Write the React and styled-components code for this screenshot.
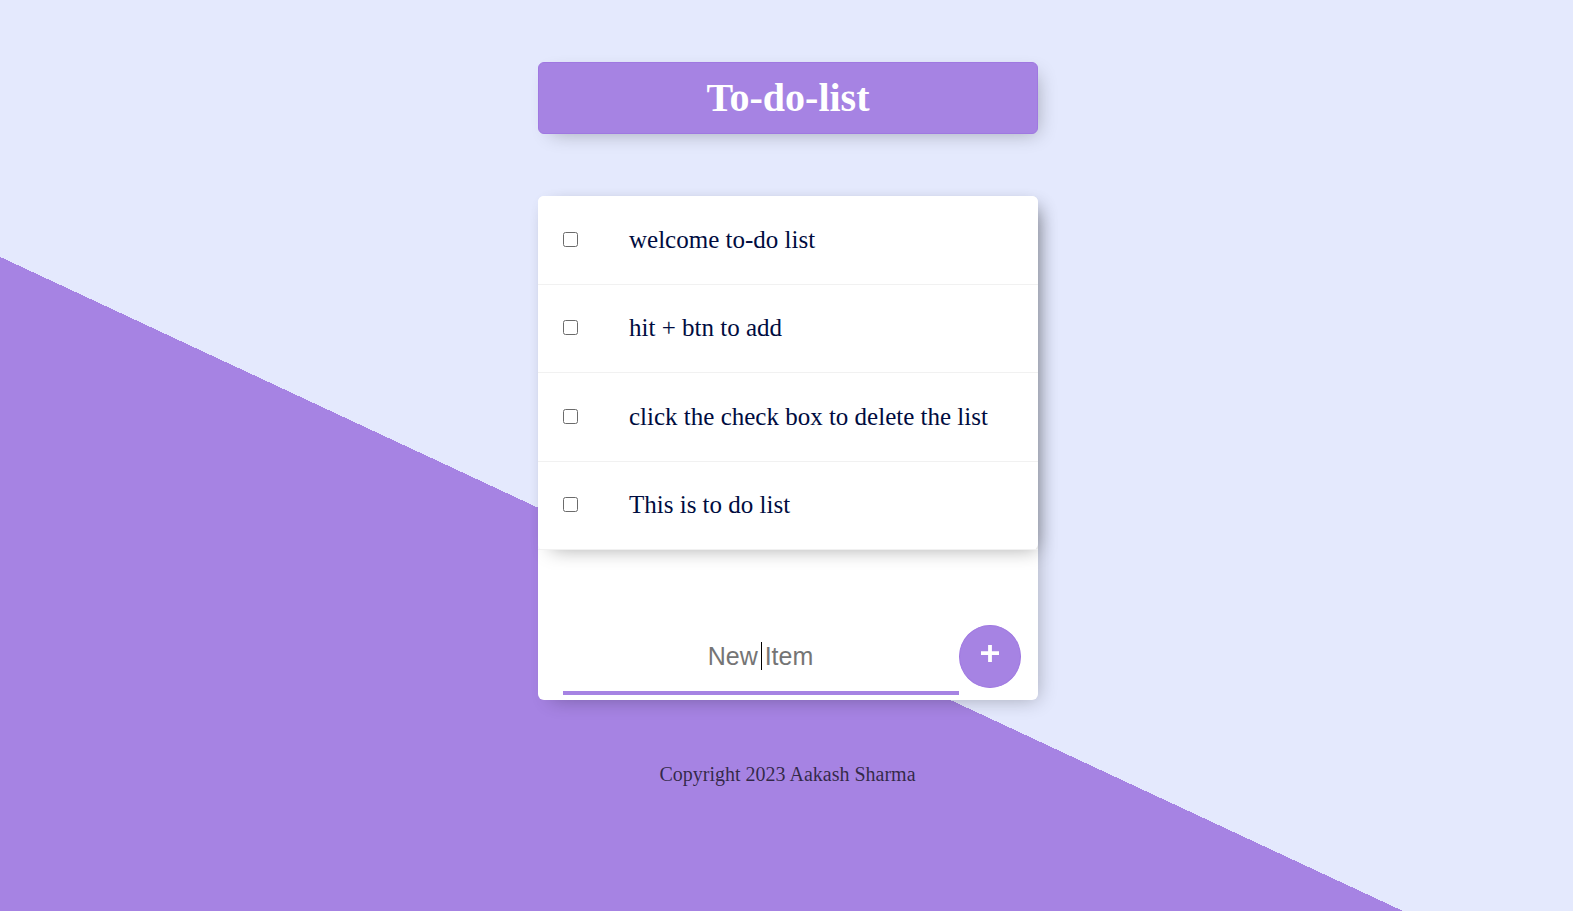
import React from "react";
import styled, { createGlobalStyle } from "styled-components";

const GlobalStyle = createGlobalStyle`
  * { box-sizing: border-box; }
  html { min-height: 100%; background: #e4e9fd; }
  body {
    margin: 0;
    font-family: "Liberation Serif", "Times New Roman", serif;
  }
`;

const shadow = "6.25px 6.25px 18.75px -6.25px rgba(0, 0, 0, 0.3)";

const Page = styled.main`
  min-height: 100vh;
  padding-top: 62px;
  display: flex;
  flex-direction: column;
  align-items: center;
  background: linear-gradient(25deg, #a683e3 39.78%, #e4e9fd 39.78%);
`;

const Heading = styled.header`
  width: 500px;
  height: 72px;
  margin-left: 3px;
  display: flex;
  align-items: center;
  justify-content: center;
  background: #a683e3;
  border: 1px solid #9f78e1;
  border-radius: 6px;
  box-shadow: ${shadow};
`;

const Title = styled.h1`
  margin: 0;
  color: #fff;
  font-size: 40px;
  line-height: 46px;
  font-weight: 700;
`;

const Card = styled.section`
  width: 500px;
  height: 503.6px;
  margin: 62.4px 0 0 3px;
  background: #fff;
  border-radius: 6px;
  box-shadow: ${shadow};
`;

const List = styled.ul`
  margin: 0;
  padding: 0;
  list-style: none;
  background: #fff;
  border-radius: 6px;
  box-shadow: 6.25px 6.25px 18.75px -6.25px rgba(0, 0, 0, 0.35);
`;

const Item = styled.li`
  height: 88.4px;
  display: flex;
  align-items: center;
  padding: 0 0 1.2px 25px;
  border-bottom: 1px solid #f1f1f1;
`;

const Check = styled.input`
  appearance: none;
  width: 15px;
  height: 15px;
  margin: 0 51px 0 0;
  border: 1px solid #6b6b6b;
  border-radius: 2.5px;
  background: #fff;
`;

const Label = styled.label`
  color: #000c40;
  font-size: 25px;
  line-height: 29px;
  white-space: nowrap;
`;

const Form = styled.form`
  display: flex;
  align-items: flex-start;
  margin: 69.1px 0 0 25px;
`;

const Field = styled.div`
  position: relative;
  width: 396px;
  height: 76px;
`;

const TextInput = styled.input`
  display: block;
  width: 100%;
  height: 100%;
  padding: 3px 1px 0 0;
  border: 0;
  border-bottom: 4px solid #a683e3;
  outline: 0;
  background: transparent;
  text-align: center;
  font: 25px "Liberation Sans", Arial, sans-serif;
  &::placeholder { color: #757575; opacity: 1; }
`;

const Caret = styled.span`
  position: absolute;
  left: 198px;
  top: 23px;
  width: 1px;
  height: 28px;
  background: #000;
`;

const AddButton = styled.button`
  width: 62px;
  height: 63px;
  margin-top: 6px;
  padding: 0;
  display: grid;
  place-items: center;
  border: 1px solid #9f78e1;
  border-radius: 50%;
  background: #a683e3;
  color: #fff;
`;

const PlusIcon = styled.svg`
  display: block;
  width: 20px;
  height: 19px;
  margin-bottom: 6px;
`;

const Footer = styled.footer`
  margin: 62px 0 0 2px;
  color: rgba(0, 0, 0, 0.7);
  font-size: 20px;
  line-height: 24px;
`;

const items = [
  "welcome to-do list",
  "hit + btn to add",
  "click the check box to delete the list",
  "This is to do list",
];

export default function App() {
  return (
    <Page>
      <GlobalStyle />
      <Heading><Title>To-do-list</Title></Heading>
      <Card>
        <List>
          {items.map((text, i) => (
            <Item key={text}>
              <Check type="checkbox" id={`item-${i}`} />
              <Label htmlFor={`item-${i}`}>{text}</Label>
            </Item>
          ))}
        </List>
        <Form onSubmit={(e) => e.preventDefault()}>
          <Field>
            <TextInput type="text" placeholder="New Item" autoComplete="off" />
            <Caret />
          </Field>
          <AddButton type="submit" aria-label="Add">
            <PlusIcon viewBox="0 0 20 19">
              <path d="M1 9.2H19M10 1V18" stroke="currentColor" strokeWidth="3.8" />
            </PlusIcon>
          </AddButton>
        </Form>
      </Card>
      <Footer>Copyright 2023 Aakash Sharma</Footer>
    </Page>
  );
}
